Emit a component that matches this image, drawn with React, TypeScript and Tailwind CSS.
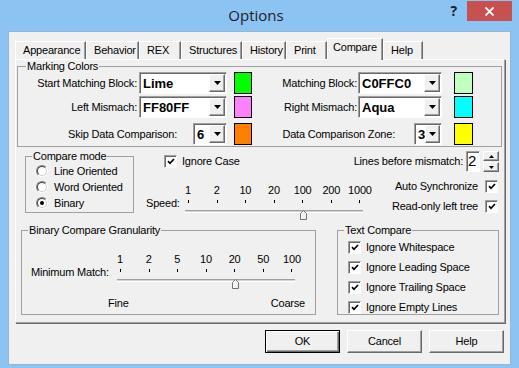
import type { ReactNode } from 'react'

const speedTicks = ['1', '2', '10', '20', '100', '200', '1000']
const matchTicks = ['1', '2', '5', '10', '20', '50', '100']

const tabs = [
  { label: 'Appearance', w: 'w-[71px]' },
  { label: 'Behavior', w: 'w-[53px]' },
  { label: 'REX', w: 'w-[42px]' },
  { label: 'Structures', w: 'w-[61px]' },
  { label: 'History', w: 'w-[44px]' },
  { label: 'Print', w: 'w-[41px]' },
  { label: 'Compare', w: 'w-[56px]', active: true },
  { label: 'Help', w: 'w-[40px]' }
]

const raised =
  'border border-t-white border-l-white border-r-[#696969] border-b-[#696969] bg-[#f0f0f0] shadow-[inset_-1px_-1px_0_#a0a0a0]'
const sunken =
  'border border-t-[#a0a0a0] border-l-[#a0a0a0] border-r-white border-b-white bg-white shadow-[inset_1px_1px_0_#696969]'

function Check({ className = '' }: { className?: string }) {
  return (
    <span
      className={`flex h-[13px] w-[13px] shrink-0 items-center justify-center ${sunken} ${className}`}
    >
      <svg width="8" height="7" viewBox="0 0 8 7">
        <path d="M1 3.2 L3 5.3 L7 1" stroke="#000" strokeWidth="1.7" fill="none" />
      </svg>
    </span>
  )
}

function Radio({ on }: { on?: boolean }) {
  return (
    <span className="flex h-[12px] w-[12px] shrink-0 rounded-full border border-t-[#808080] border-l-[#808080] border-r-white border-b-white">
      <span className="flex flex-1 items-center justify-center rounded-full border border-t-[#404040] border-l-[#404040] border-r-[#d4d0c8] border-b-[#d4d0c8] bg-white">
        {on && <span className="h-[4px] w-[4px] rounded-full bg-black" />}
      </span>
    </span>
  )
}

function Combo({ value, className }: { value: string; className: string }) {
  return (
    <div className={`flex h-[22px] shrink-0 p-px ${sunken} ${className}`}>
      <span className="flex-1 pl-[2px] text-[13px] font-bold leading-[19px] tracking-normal">
        {value}
      </span>
      <span className={`flex w-[16px] items-center justify-center ${raised}`}>
        <svg width="7" height="4" viewBox="0 0 7 4">
          <polygon points="0,0 7,0 3.5,4" fill="#000" />
        </svg>
      </span>
    </div>
  )
}

function Swatch({ className }: { className: string }) {
  return <div className={`h-[22px] shrink-0 border border-black ${className}`} />
}

function Slider({ ticks, pos }: { ticks: string[]; pos: number }) {
  const step = 172 / (ticks.length - 1)
  return (
    <div className="w-[178px] shrink-0">
      <div className="flex h-[13px] justify-between px-[3px]">
        {ticks.map((t) => (
          <div key={t} className="flex w-0 justify-center">
            <span className="whitespace-nowrap">{t}</span>
          </div>
        ))}
      </div>
      <div className="flex h-[8px] justify-between px-[3px] pt-[3px]">
        {ticks.map((t) => (
          <div key={t} className="h-[3px] w-px bg-black" />
        ))}
      </div>
      <div className="relative h-[10px]">
        <div className="mt-[5px] h-[3px] border-t border-b border-t-[#a0a0a0] border-b-white bg-[#d4d4d4]" />
        <svg
          className="absolute top-0"
          style={{ left: 3 + pos * step - 3 }}
          width="7"
          height="10"
          viewBox="0 0 7 10"
        >
          <path d="M0.5 9.5 V3.5 L3.5 0.5 L6.5 3.5 V9.5 Z" fill="#f0f0f0" stroke="#707070" />
          <path d="M1.5 9 V3.9 L3.5 1.9" stroke="#fff" fill="none" />
        </svg>
      </div>
    </div>
  )
}

function Group({
  title,
  className,
  legend = 'ml-[6px]',
  children
}: {
  title: string
  className: string
  legend?: string
  children: ReactNode
}) {
  return (
    <fieldset className={`shrink-0 border border-[#a0a0a0] ${className}`}>
      <legend className={`px-px leading-[13px] ${legend}`}>{title}</legend>
      {children}
    </fieldset>
  )
}

function SpinBtn({ up }: { up?: boolean }) {
  return (
    <div className={`flex h-[10px] w-[16px] items-center justify-center ${raised}`}>
      <svg width="5" height="3" viewBox="0 0 5 3">
        <polygon points={up ? '2.5,0 5,3 0,3' : '0,0 5,0 2.5,3'} fill="#000" />
      </svg>
    </div>
  )
}

function Btn({ label, def }: { label: string; def?: boolean }) {
  return (
    <div
      className={`flex h-[23px] w-[75px] items-center justify-center bg-[#f0f0f0] ${
        def
          ? 'border border-black shadow-[inset_1px_1px_0_#fff,inset_-1px_-1px_0_#696969,inset_-2px_-2px_0_#a0a0a0]'
          : 'border border-t-white border-l-white border-r-[#696969] border-b-[#696969] shadow-[inset_-1px_-1px_0_#a0a0a0]'
      }`}
    >
      {label}
    </div>
  )
}

export default function App() {
  return (
    <div className="flex h-[368px] w-[519px] flex-col overflow-hidden bg-[#8bc3f3] font-['Liberation_Sans',Arial,sans-serif] text-[11px] leading-[13px] tracking-[-0.2px] text-black">
      {/* title bar */}
      <div className="flex h-[31px] shrink-0 items-start">
        <div className="flex-1" />
        <div className="mt-[5px] font-['Open_Sans',sans-serif] text-[15px] leading-[20px] tracking-normal text-[#1e1e1e]">
          Options
        </div>
        <div className="flex flex-1 items-start justify-end pr-[7px]">
          <span className="mr-[10px] mt-[2px] font-['Open_Sans',sans-serif] text-[14px] font-bold leading-[18px] text-[#1e1e1e]">
            ?
          </span>
          <div className="mt-px flex h-[20px] w-[45px] items-center justify-center bg-[#c75050]">
            <svg width="9" height="9" viewBox="0 0 9 9">
              <path d="M0.5 0.5 L8.5 8.5 M8.5 0.5 L0.5 8.5" stroke="#fff" strokeWidth="1.8" />
            </svg>
          </div>
        </div>
      </div>

      {/* client */}
      <div className="mx-[8px] flex h-[334px] shrink-0 flex-col border border-[#96b6d6] bg-[#f0f0f0]">
        <div className="flex h-[27px] shrink-0 items-end pl-[6px]">
          {tabs.map((t) =>
            t.active ? (
              <div
                key={t.label}
                className={`relative z-10 -mb-px h-[22px] shrink-0 border-l border-t border-r border-l-white border-t-white border-r-[#696969] bg-[#f0f0f0] pl-[5px] pt-[2px] shadow-[inset_-1px_0_0_#a0a0a0] ${t.w}`}
              >
                {t.label}
              </div>
            ) : (
              <div
                key={t.label}
                className={`h-[18px] shrink-0 border-l border-t border-r border-l-white border-t-white border-r-[#696969] pl-[7px] pt-[2px] shadow-[inset_-1px_0_0_#a0a0a0] ${t.w}`}
              >
                {t.label}
              </div>
            )
          )}
        </div>

        {/* tab panel */}
        <div className="ml-[6px] h-[264px] w-[490px] shrink-0 border border-t-white border-l-white border-r-[#a0a0a0] border-b-[#a0a0a0] shadow-[1px_1px_0_#696969]">
          <Group title="Marking Colors" legend="ml-[8px]" className="ml-px w-[485px] pb-px">
            <div className="-mt-px flex h-[22px] items-center">
              <div className="flex w-[209px] items-center justify-end">
                <span>Start Matching Block:</span>
                <Combo value="Lime" className="ml-[2px] w-[88px]" />
              </div>
              <Swatch className="ml-[7px] w-[18px] bg-[#00ff00]" />
              <div className="flex w-[190px] items-center justify-end">
                <span>Matching Block:</span>
                <Combo value="C0FFC0" className="ml-px w-[84px]" />
              </div>
              <Swatch className="ml-[12px] w-[19px] bg-[#c0ffc0]" />
            </div>
            <div className="mt-[2px] flex h-[22px] items-center">
              <div className="flex w-[209px] items-center justify-end">
                <span>Left Mismach:</span>
                <Combo value="FF80FF" className="ml-[2px] w-[88px]" />
              </div>
              <Swatch className="ml-[7px] w-[18px] bg-[#ff80ff]" />
              <div className="flex w-[190px] items-center justify-end">
                <span>Right Mismach:</span>
                <Combo value="Aqua" className="ml-px w-[84px]" />
              </div>
              <Swatch className="ml-[12px] w-[19px] bg-[#00ffff]" />
            </div>
            <div className="mt-[5px] flex h-[22px] items-center">
              <div className="flex w-[209px] items-center justify-end">
                <span>Skip Data Comparison:</span>
                <Combo value="6" className="ml-[16px] w-[34px]" />
              </div>
              <Swatch className="ml-[7px] w-[18px] bg-[#ff8000]" />
              <div className="flex w-[190px] items-center justify-end">
                <span>Data Comparison Zone:</span>
                <Combo value="3" className="ml-[19px] w-[28px]" />
              </div>
              <Swatch className="ml-[12px] w-[19px] bg-[#ffff00]" />
            </div>
          </Group>

          {/* middle */}
          <div className="mt-[3px] flex h-[74px]">
            <Group title="Compare mode" className="ml-[9px] h-[63px] w-[109px]">
              <div className="flex flex-col pl-[10px]">
                {['Line Oriented', 'Word Oriented', 'Binary'].map((t, i) => (
                  <div key={t} className="flex h-[16px] items-center gap-[6px]">
                    <Radio on={i === 2} />
                    <span>{t}</span>
                  </div>
                ))}
              </div>
            </Group>
            <div className="flex w-[229px] shrink-0 flex-col">
              <div className="ml-[30px] mt-[5px] flex items-center">
                <Check />
                <span className="ml-[5px]">Ignore Case</span>
              </div>
              <div className="ml-[12px] mt-[16px] flex">
                <span className="mt-[13px] w-[39px] shrink-0">Speed:</span>
                <Slider ticks={speedTicks} pos={4} />
              </div>
            </div>
            <div className="flex min-w-0 flex-1 flex-col items-end pr-[5px]">
              <div className="mt-px flex h-[21px] shrink-0 items-center">
                <span className="whitespace-nowrap">Lines before mismatch:</span>
                <div
                  className={`ml-[3px] h-[21px] w-[14px] shrink-0 pl-px text-[15px] leading-[17px] ${sunken}`}
                >
                  2
                </div>
                <div className="ml-[3px] flex w-[16px] shrink-0 flex-col gap-px">
                  <SpinBtn up />
                  <SpinBtn />
                </div>
              </div>
              <div className="mr-px mt-[8px] flex items-center">
                <span className="whitespace-nowrap">Auto Synchronize</span>
                <Check className="ml-[7px]" />
              </div>
              <div className="mr-px mt-[7px] flex items-center">
                <span className="whitespace-nowrap">Read-only left tree</span>
                <Check className="ml-[7px]" />
              </div>
            </div>
          </div>

          {/* bottom */}
          <div className="flex">
            <Group title="Binary Compare Granularity" className="ml-[5px] h-[91px] w-[295px]">
              <div className="ml-[9px] mt-[16px] flex">
                <span className="mt-[13px] w-[86px] shrink-0">Minimum Match:</span>
                <Slider ticks={matchTicks} pos={4} />
              </div>
              <div className="ml-[86px] mt-[8px] flex w-[197px] justify-between">
                <span>Fine</span>
                <span>Coarse</span>
              </div>
            </Group>
            <Group title="Text Compare" className="ml-[21px] h-[91px] w-[162px]">
              <div className="flex flex-col pl-[10px]">
                {[
                  'Ignore Whitespace',
                  'Ignore Leading Space',
                  'Ignore Trailing Space',
                  'Ignore Empty Lines'
                ].map((t) => (
                  <div key={t} className="flex h-[20px] items-center">
                    <Check />
                    <span className="ml-[5px] whitespace-nowrap">{t}</span>
                  </div>
                ))}
              </div>
            </Group>
          </div>
        </div>

        <div className="mt-[7px] flex justify-end gap-[7px] pr-[6px]">
          <Btn label="OK" def />
          <Btn label="Cancel" />
          <Btn label="Help" />
        </div>
      </div>
    </div>
  )
}
